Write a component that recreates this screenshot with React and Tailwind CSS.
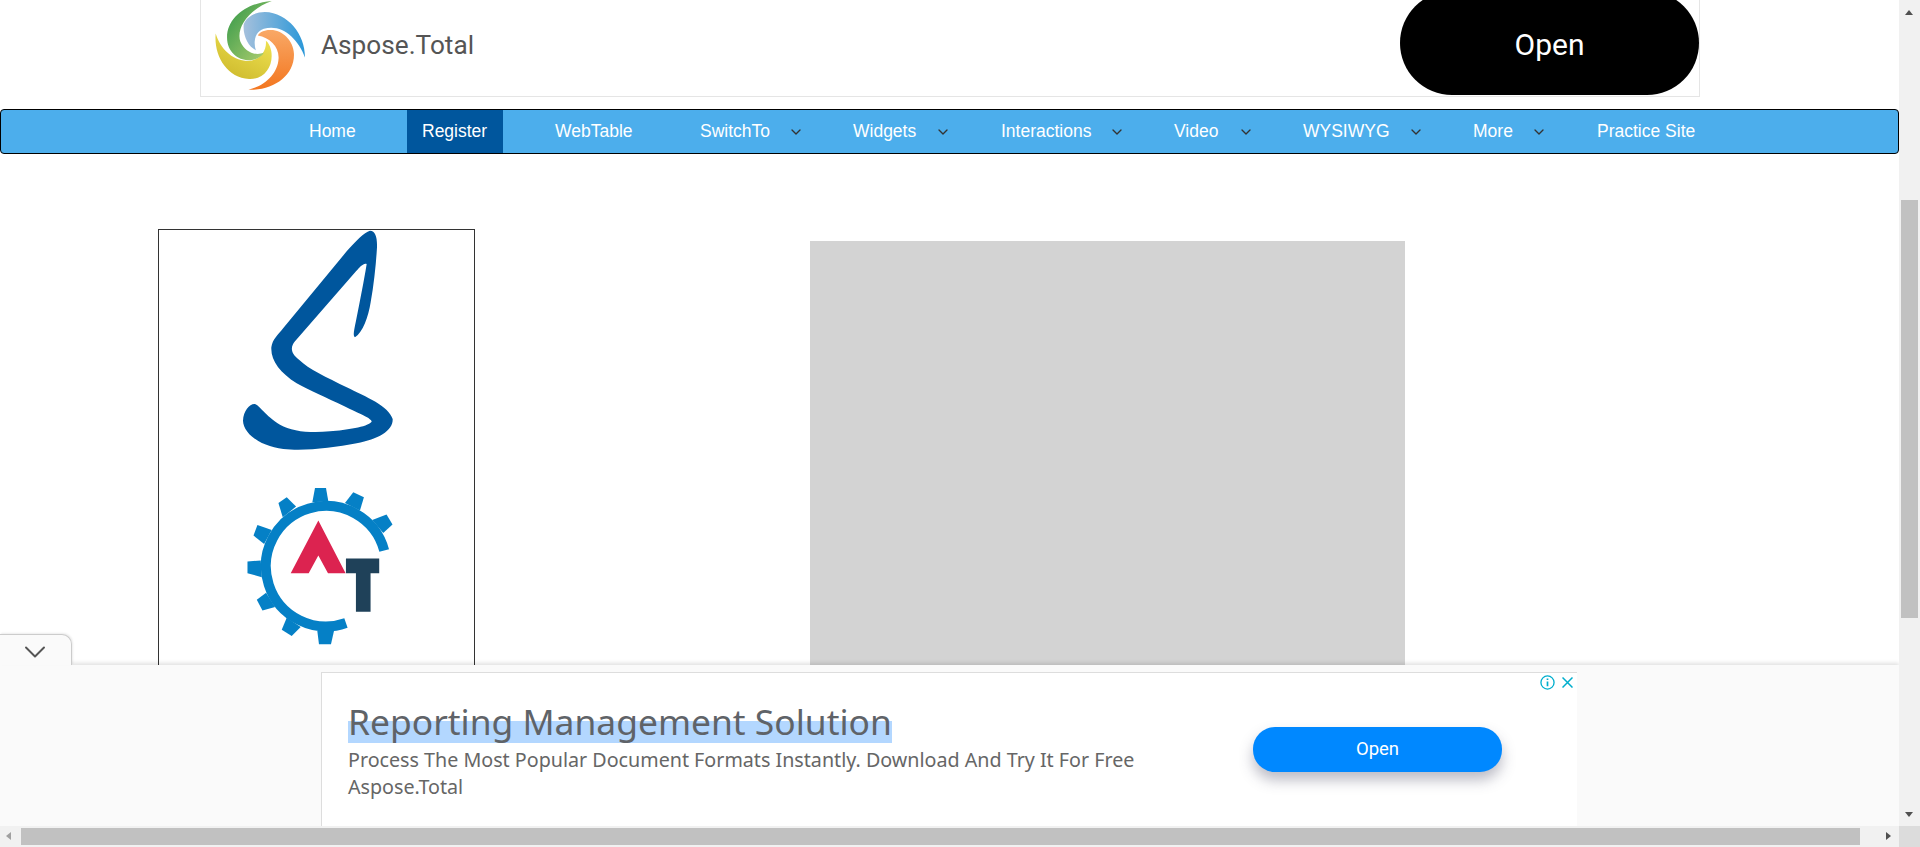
import React from 'react';
import { ChevronDown } from 'lucide-react';

const navItems = [
  { label: 'Home', width: 'w-[76px] mr-[37px]' },
  { label: 'Register', width: 'w-[96px] mr-[37px] bg-[#00569d]' },
  { label: 'WebTable', width: 'w-[108px] mr-[37px]' },
  { label: 'SwitchTo', width: 'w-[128px] mr-[25px]', caret: true },
  { label: 'Widgets', width: 'w-[122px] mr-[26px]', caret: true },
  { label: 'Interactions', width: 'w-[148px] mr-[25px]', caret: true },
  { label: 'Video', width: 'w-[104px] mr-[25px]', caret: true },
  { label: 'WYSIWYG', width: 'w-[145px] mr-[25px]', caret: true },
  { label: 'More', width: 'w-[98px] mr-[26px]', caret: true },
  { label: 'Practice Site', width: 'w-[128px]' },
];

const SwirlLogo = () => (
  <svg viewBox="70 0 290 275" className="h-[92px] w-[97px] shrink-0">
    <defs>
      <linearGradient id="sg" x1="0" y1="0" x2="1" y2="1">
        <stop offset="0" stopColor="#2f9648" />
        <stop offset="1" stopColor="#b5d170" />
      </linearGradient>
      <linearGradient id="sb" x1="1" y1="0.6" x2="0" y2="0.6">
        <stop offset="0" stopColor="#2a97d8" />
        <stop offset="1" stopColor="#a5c0dc" />
      </linearGradient>
      <linearGradient id="so" x1="0.5" y1="1" x2="0.5" y2="0">
        <stop offset="0" stopColor="#f3761f" />
        <stop offset="1" stopColor="#f9a866" />
      </linearGradient>
      <linearGradient id="sy" x1="0.2" y1="1" x2="0.8" y2="0">
        <stop offset="0" stopColor="#cdb92c" />
        <stop offset="1" stopColor="#f0e352" />
      </linearGradient>
    </defs>
    <path d="M78 100C72 165 110 232 178 236C225 238 252 195 244 152C240 132 232 125 228 122C232 155 205 184 170 182C125 178 92 145 78 100Z" fill="url(#sy)" />
    <path d="M246 3C175 8 112 50 112 112C112 155 145 182 182 180C200 178 216 170 222 158C195 168 165 155 152 125C138 85 175 28 246 3Z" fill="url(#sg)" />
    <path d="M345 172C346 105 295 38 225 36C195 36 170 50 162 72C158 105 175 140 198 150C190 125 195 95 222 86C275 70 325 115 345 172Z" fill="url(#sb)" />
    <path d="M176 268C250 272 315 225 312 160C310 120 275 88 240 90C222 90 210 97 204 106C240 112 268 140 266 175C264 220 225 258 176 268Z" fill="url(#so)" />
  </svg>
);

const SLogo = () => (
  <svg viewBox="300 28 480 660" className="block h-[220px] w-[160px] blur-[0.5px]">
    <path
      d="M690 30C706 30 712 50 711 80C708 130 702 190 692 245C685 290 668 335 645 350C638 345 642 330 648 300C660 240 672 180 680 130C672 125 660 138 648 152L465 362C450 380 452 398 478 418C505 445 560 470 620 500C680 530 745 555 758 595C760 630 715 655 650 668C580 682 490 692 430 685C365 678 310 640 309 600C310 570 330 548 345 550C360 555 375 585 420 612C455 632 510 638 570 632C620 627 680 620 695 603C695 592 660 580 610 555C560 532 510 510 470 488C420 455 392 420 394 380C398 355 412 345 430 322L620 92C648 60 672 35 690 30Z"
      fill="#00569d"
    />
  </svg>
);

const GearLogo = () => (
  <svg viewBox="300 40 480 490" className="mt-[34px] block h-[163px] w-[160px]">
    <path d="M733 240A181 181 0 1 0 618 458" fill="none" stroke="#0580c6" strokeWidth="30" />
    <g fill="#0580c6">
      <polygon points="517,95 525,52 558,52 565,92" />
      <polygon points="615,97 640,65 672,80 660,120" />
      <polygon points="697,148 740,132 758,162 730,187" />
      <polygon points="468,108 440,80 415,97 428,140" />
      <polygon points="395,178 352,163 340,195 372,220" />
      <polygon points="362,270 322,273 322,308 365,320" />
      <polygon points="378,367 350,388 367,420 405,410" />
      <polygon points="440,442 425,478 455,497 482,470" />
      <polygon points="532,482 537,522 573,522 582,482" />
    </g>
    <polygon points="535,150 617,308 564,308 535,255 506,308 452,308" fill="#dc2350" />
    <polygon points="618,264 718,264 718,308 692,308 692,424 648,424 648,308 618,308" fill="#1f4159" />
  </svg>
);

const TopAd = () => (
  <div className="ml-[200px] mr-[199px] flex h-[97px] items-start justify-between overflow-hidden border border-t-0 border-[#e5e5e5] bg-white">
    <div className="flex items-center pl-[12px]">
      <SwirlLogo />
      <span className="ml-[11px] font-['Roboto',sans-serif] text-[26.2px] text-[#555555]">Aspose.Total</span>
    </div>
    <div className="flex h-[104px] w-[299px] -translate-y-[9px] items-center justify-center rounded-[52px] bg-black font-['Roboto',sans-serif] text-[30px] text-white">
      <span className="translate-y-[1px]">Open</span>
    </div>
  </div>
);

const NavBar = () => (
  <nav className="mt-[12px] flex h-[45px] items-stretch rounded-[4px] border border-black bg-[#4caeec] pl-[293px] font-['Liberation_Sans',sans-serif] text-[17.5px] text-white">
    {navItems.map((item) => (
      <div key={item.label} className={`flex items-center justify-between whitespace-nowrap px-[15px] ${item.width}`}>
        <span>{item.label}</span>
        {item.caret && <ChevronDown size={16} className="mr-[-6px] text-[#333333]" />}
      </div>
    ))}
  </nav>
);

const BottomAd = () => (
  <div className="absolute inset-x-0 bottom-0 h-[161px]">
    <div className="h-full bg-[#fafafa] pt-[7px] shadow-[0_-2px_4px_rgba(0,0,0,0.12)]">
      <div className="relative ml-[321px] h-[154px] w-[1256px] border-t border-l border-[#dddddd] bg-white pl-[26px] pt-[26px] font-['Noto_Sans',sans-serif]">
        <div className="absolute right-[4px] top-[2px] flex items-center gap-[7px] text-[#00aecd]">
          <svg viewBox="0 0 16 16" className="h-[15px] w-[15px]" fill="none" stroke="currentColor" strokeWidth="1.4">
            <circle cx="8" cy="8" r="7" />
            <path d="M8 7v5M8 3.6v1.8" strokeWidth="1.8" />
          </svg>
          <svg viewBox="0 0 11 11" className="h-[11px] w-[11px]" fill="none" stroke="currentColor" strokeWidth="1.5">
            <path d="M0.5 0.5l10 10M10.5 0.5l-10 10" />
          </svg>
        </div>
        <h2 className="inline-block bg-[linear-gradient(transparent_50%,#b3d7ff_50%)] text-[35.4px] leading-[44px] text-[#5f6368]">
          Reporting Management Solution
        </h2>
        <p className="mt-[3px] w-[800px] text-[19.7px] leading-[27px] text-[#666666]">
          Process The Most Popular Document Formats Instantly. Download And Try It For Free
        </p>
        <p className="text-[19.7px] leading-[27px] text-[#666666]">Aspose.Total</p>
        <div className="absolute left-[931px] top-[54px] flex h-[45px] w-[249px] items-center justify-center rounded-[22px] bg-[#0088ff] font-['Roboto',sans-serif] text-[18.5px] text-white shadow-[0_8px_14px_rgba(60,60,90,0.35)]">
          Open
        </div>
      </div>
    </div>
    <div className="absolute left-0 top-[-31px] flex h-[31px] w-[72px] items-center justify-center rounded-tr-[10px] border-t border-r border-[#cccccc] bg-[#fafafa] pr-[2px] pt-[4px] shadow-[1px_-1px_2px_rgba(0,0,0,0.08)]">
      <ChevronDown size={36} strokeWidth={1.3} className="text-[#555555]" />
    </div>
  </div>
);

const VerticalScrollbar = () => (
  <div className="relative w-[21px] shrink-0 bg-[#f1f1f1]">
    <div className="absolute left-[2px] right-[2px] top-[200px] h-[418px] bg-[#c1c1c1]" />
    <div className="absolute left-[6px] top-[10px] h-0 w-0 border-x-[4.5px] border-b-[5px] border-x-transparent border-b-[#505050]" />
    <div className="absolute bottom-[9px] left-[6px] h-0 w-0 border-x-[4.5px] border-t-[5px] border-x-transparent border-t-[#505050]" />
  </div>
);

const HorizontalScrollbar = () => (
  <div className="relative h-[21px] shrink-0 bg-[#f1f1f1]">
    <div className="absolute bottom-[2px] left-[21px] top-[2px] w-[1839px] bg-[#c1c1c1]" />
    <div className="absolute left-[6px] top-[6px] h-0 w-0 border-y-[4.5px] border-r-[5px] border-y-transparent border-r-[#a0a0a0]" />
    <div className="absolute right-[29px] top-[6px] h-0 w-0 border-y-[4.5px] border-l-[5px] border-y-transparent border-l-[#505050]" />
    <div className="absolute bottom-0 right-0 top-0 w-[21px] bg-[#dcdcdc]" />
  </div>
);

export default function App() {
  return (
    <div className="flex h-[847px] w-[1920px] flex-col overflow-hidden bg-white">
      <div className="flex min-h-0 flex-1">
        <div className="relative min-w-0 flex-1 overflow-hidden">
          <TopAd />
          <NavBar />
          <main className="flex items-start pt-[75px]">
            <div className="ml-[158px] h-[600px] w-[317px] shrink-0 border border-[#333333] pl-[81px]">
              <SLogo />
              <GearLogo />
            </div>
            <div className="ml-[335px] mt-[12px] h-[600px] w-[595px] shrink-0 bg-[#d3d3d3]" />
          </main>
          <BottomAd />
        </div>
        <VerticalScrollbar />
      </div>
      <HorizontalScrollbar />
    </div>
  );
}
